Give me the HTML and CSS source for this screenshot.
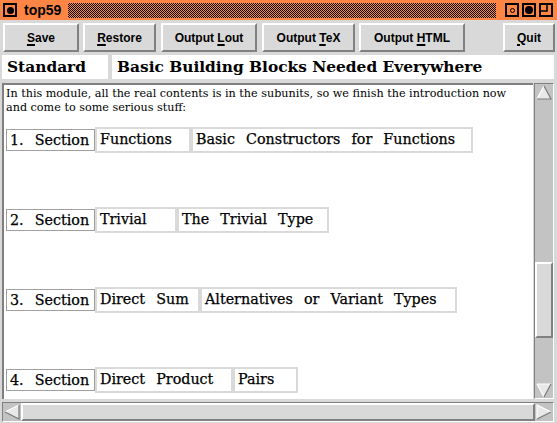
FILE: index.html
```html
<!DOCTYPE html>
<html>
<head>
<meta charset="utf-8">
<link rel="stylesheet" href="styles.css">
</head>
<body>
<div class="titlebar">
  <div class="tbtn"><span class="dot"></span></div>
  <div class="title">top59</div>
  <div class="checker"></div>
  <div class="tbtn"><span class="ring"></span></div>
  <div class="tbtn"><span class="dot big"></span></div>
  <div class="tbtn"><svg width="10" height="10" viewBox="0 0 10 10"><path d="M6 0 V6 H0" fill="none" stroke="#000" stroke-width="1.6"/></svg></div>
</div>
<div class="toolbar">
  <div class="btn w-save"><span><u>S</u>ave</span></div>
  <div class="btn w-restore"><span><u>R</u>estore</span></div>
  <div class="btn w-lout"><span>Output <u>L</u>out</span></div>
  <div class="btn w-tex"><span>Output <u>T</u>eX</span></div>
  <div class="btn w-html"><span>Output <u>H</u>TML</span></div>
  <div class="spacer"></div>
  <div class="btn w-quit"><span><u>Q</u>uit</span></div>
</div>
<div class="header">
  <div class="hbox hleft">Standard</div>
  <div class="hbox hright">Basic Building Blocks Needed Everywhere</div>
</div>
<div class="main">
  <div class="content">
    <p class="intro">In this module, all the real contents is in the subunits, so we finish the introduction now and come to some serious stuff:</p>
    <div class="row">
      <div class="sec">1.&nbsp; Section</div>
      <div class="cell c-fn">Functions</div>
      <div class="cell c-basic">Basic&nbsp; Constructors&nbsp; for&nbsp; Functions</div>
    </div>
    <div class="row">
      <div class="sec">2.&nbsp; Section</div>
      <div class="cell c-triv">Trivial</div>
      <div class="cell c-trivtype">The&nbsp; Trivial&nbsp; Type</div>
    </div>
    <div class="row">
      <div class="sec">3.&nbsp; Section</div>
      <div class="cell c-dsum">Direct&nbsp; Sum</div>
      <div class="cell c-alt">Alternatives&nbsp; or&nbsp; Variant&nbsp; Types</div>
    </div>
    <div class="row">
      <div class="sec">4.&nbsp; Section</div>
      <div class="cell c-dprod">Direct&nbsp; Product</div>
      <div class="cell c-pairs">Pairs</div>
    </div>
  </div>
  <div class="vscroll">
    <div class="arrow up"><svg width="16" height="15" viewBox="0 0 16 15"><polygon points="8,1 15,14 1,14" fill="#e8e8e8"/><path d="M1 14 L8 1" stroke="#fff" stroke-width="1.2"/><path d="M8 1 L15 14 H1" fill="none" stroke="#7a7a7a" stroke-width="1.2"/></svg></div>
    <div class="vtrack">
      <div class="vthumb"></div>
    </div>
    <div class="arrow down"><svg width="16" height="15" viewBox="0 0 16 15"><polygon points="1,1 15,1 8,14" fill="#e8e8e8"/><path d="M1 1 H15 M1 1 L8 14" stroke="#fff" stroke-width="1.2"/><path d="M15 1 L8 14" stroke="#7a7a7a" stroke-width="1.2"/></svg></div>
  </div>
</div>
<div class="hscroll">
  <div class="arrow left"><svg width="16" height="16" viewBox="0 0 16 16"><polygon points="1,8 15,1 15,15" fill="#e8e8e8"/><path d="M15 1 L1 8" stroke="#fff" stroke-width="1.2"/><path d="M1 8 L15 15 V1" fill="none" stroke="#7a7a7a" stroke-width="1.2"/></svg></div>
  <div class="hthumb"></div>
  <div class="arrow right"><svg width="16" height="16" viewBox="0 0 16 16"><polygon points="1,1 15,8 1,15" fill="#e8e8e8"/><path d="M1 15 V1 L15 8" fill="none" stroke="#fff" stroke-width="1.2"/><path d="M15 8 L1 15" stroke="#7a7a7a" stroke-width="1.2"/></svg></div>
</div>
</body>
</html>
```

FILE: styles.css
```css
html, body {
  margin: 0;
  padding: 0;
}
body {
  width: 557px;
  height: 423px;
  background: #d9d9d9;
  font-family: "Liberation Sans", Arial, sans-serif;
  overflow: hidden;
}
.titlebar {
  height: 20px;
  background: #ff8545;
  display: flex;
  align-items: center;
  padding: 0 4px 0 3px;
  box-sizing: border-box;
}
.tbtn {
  width: 10px;
  height: 10px;
  border: 2px solid #000;
  display: flex;
  align-items: center;
  justify-content: center;
  margin-left: 3px;
}
.tbtn:first-child { margin-left: 0; }
.dot {
  width: 7px;
  height: 7px;
  background: #000;
  border-radius: 50%;
}
.dot.big { width: 8px; height: 8px; }
.ring {
  width: 3px;
  height: 3px;
  border: 1px solid #000;
  border-radius: 50%;
}
.title {
  font-weight: bold;
  font-size: 14px;
  margin: 0 7px 0 7px;
  color: #000;
  line-height: 20px;
}
.checker {
  flex: 1;
  height: 15px;
  margin-right: 6px;
  background-color: #ff8545;
  background-image: conic-gradient(#000 25%, transparent 0 50%, #000 0 75%, transparent 0);
  background-size: 2px 2px;
}
.toolbar {
  display: flex;
  padding: 3px 2px 0 3px;
  height: 29px;
}
.btn {
  box-sizing: border-box;
  height: 29px;
  border: 2px solid;
  border-color: #fff #808080 #808080 #fff;
  background: #d9d9d9;
  font-weight: bold;
  font-size: 12px;
  display: flex;
  align-items: center;
  justify-content: center;
  margin-right: 5px;
  color: #000;
  white-space: pre;
}
.btn u { text-underline-offset: 2px; text-decoration-thickness: 2px; }
.w-save { width: 76px; margin-right: 4px; }
.w-restore { width: 73px; margin-right: 5px; }
.w-lout { width: 96px; }
.w-tex { width: 93px; margin-right: 4px; }
.w-html { width: 106px; }
.spacer { flex: 1; }
.w-quit { width: 52px; margin-right: 0; }
.header {
  display: flex;
  padding: 3px 3px 0 2px;
  height: 24px;
  gap: 4px;
}
.hbox {
  background: #fff;
  font-family: "DejaVu Serif", "Liberation Serif", serif;
  font-weight: bold;
  font-size: 15.4px;
  line-height: 24px;
  padding-left: 5px;
  box-sizing: border-box;
}
.hleft { width: 106px; }
.hright { flex: 1; }
.main {
  display: flex;
  margin: 4px 3px 0 2px;
  height: 316px;
}
.content {
  flex: 1;
  background: #fff;
  border: 2px solid;
  border-color: #808080 #d9d9d9 #d9d9d9 #808080;
  border-right: 0;
  border-bottom: 0;
  overflow: hidden;
  padding: 2px 0 0 2px;
}
.intro {
  margin: 0 0 12px 0;
  font-family: "DejaVu Serif", "Liberation Serif", serif;
  font-size: 11.2px;
  line-height: 14px;
  width: 512px;
}
.row {
  display: flex;
  align-items: center;
  height: 26px;
  margin: 0 0 54px 0;
  font-family: "DejaVu Serif", "Liberation Serif", serif;
  font-size: 14.3px;
  word-spacing: 1px;
  -webkit-text-stroke: 0.25px #000;
}
.sec {
  border: 1px solid #a0a0a0;
  height: 22px;
  width: 89px;
  line-height: 21px;
  box-sizing: border-box;
  padding: 0 3px;
  white-space: nowrap;
}
.cell {
  border: 2px solid #d9d9d9;
  height: 26px;
  line-height: 21px;
  box-sizing: border-box;
  padding: 0 3px;
  white-space: nowrap;
  overflow: hidden;
}
.c-fn { width: 96px; }
.c-basic { width: 282px; }
.c-triv { width: 82px; }
.c-trivtype { width: 152px; }
.c-dsum { width: 105px; }
.c-alt { width: 257px; }
.c-dprod { width: 138px; }
.c-pairs { width: 65px; }
.vscroll {
  width: 20px;
  box-sizing: border-box;
  background: #c3c3c3;
  border: 1px solid;
  border-color: #808080 #fff #fff #808080;
  display: flex;
  flex-direction: column;
  margin-left: 1px;
}
.arrow {
  height: 16px;
  display: flex;
  align-items: center;
  justify-content: center;
}
.vtrack {
  flex: 1;
  display: flex;
  flex-direction: column;
  justify-content: flex-end;
  padding-bottom: 44px;
}
.vthumb {
  height: 76px;
  box-sizing: border-box;
  background: #d9d9d9;
  border: 2px solid;
  border-color: #fff #808080 #808080 #fff;
}
.hscroll {
  margin: 3px 3px 0 2px;
  height: 20px;
  box-sizing: border-box;
  background: #c3c3c3;
  border: 1px solid;
  border-color: #808080 #fff #fff #808080;
  display: flex;
  align-items: center;
}
.hscroll .arrow { width: 18px; height: 18px; }
.hthumb {
  flex: 1;
  height: 18px;
  box-sizing: border-box;
  background: #d9d9d9;
  border: 2px solid;
  border-color: #fff #808080 #808080 #fff;
}
```
